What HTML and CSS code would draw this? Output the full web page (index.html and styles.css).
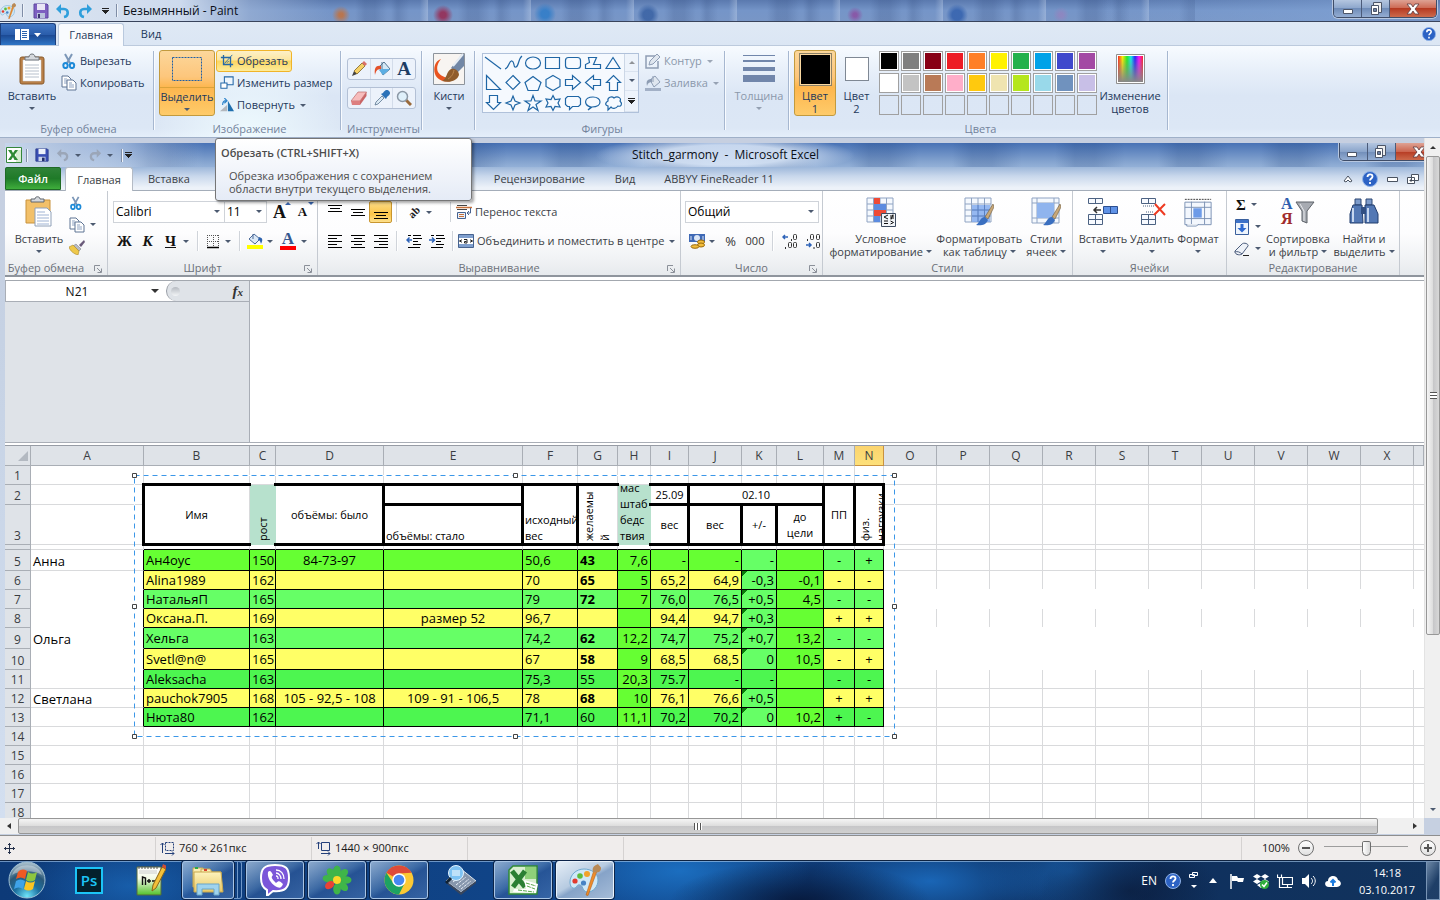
FILE: index.html
```html
<!DOCTYPE html>
<html lang="ru">
<head>
<meta charset="utf-8">
<title>Безымянный - Paint</title>
<link rel="stylesheet" href="styles.css">
</head>
<body>
<svg class="defs" aria-hidden="true">
  <defs>
    <linearGradient id="gFolder" x1="0" y1="0" x2="0" y2="1"><stop offset="0" stop-color="#fdf3bd"/><stop offset="1" stop-color="#e9c866"/></linearGradient>
    <linearGradient id="gRainbow"><stop offset="0" stop-color="#f22"/><stop offset=".18" stop-color="#fe0"/><stop offset=".36" stop-color="#2e2"/><stop offset=".52" stop-color="#1ee"/><stop offset=".68" stop-color="#22f"/><stop offset=".84" stop-color="#f1f"/><stop offset="1" stop-color="#f22"/></linearGradient>
    <linearGradient id="gGray" x1="0" y1="0" x2="0" y2="1"><stop offset="0" stop-color="#888" stop-opacity="0"/><stop offset="1" stop-color="#888"/></linearGradient>
    <radialGradient id="gOrb" cx=".5" cy=".95" r=".9"><stop offset="0" stop-color="#6fe6fb"/><stop offset=".4" stop-color="#1c6f9f"/><stop offset=".7" stop-color="#2a5878"/><stop offset="1" stop-color="#9fb8c6"/></radialGradient>
    <linearGradient id="gNpp" x1="0" y1="0" x2="0" y2="1"><stop offset="0" stop-color="#fff"/><stop offset=".4" stop-color="#f4fbe8"/><stop offset="1" stop-color="#52c12a"/></linearGradient>
  </defs>
  <symbol id="palette" viewBox="0 0 32 32"><path d="M15 5C7 5 1 11 1 18c0 4 2 7 5 6 2-1 2-4 5-3 3 0 2 6 7 7 7 0 11-6 11-12C29 9 22 5 15 5z" fill="#cfe8f7" stroke="#6fa9cf"/><circle cx="6" cy="17" r="2.6" fill="#e23a2e"/><circle cx="11" cy="12" r="2.8" fill="#5dbb3c"/><circle cx="18" cy="10" r="3" fill="#f2a32a"/><circle cx="14.500" cy="19" r="2.600" fill="#4783c4"/><path d="M25 6l-8 25 2 .5L28 7z" fill="#ef8d2c" stroke="#b4611a" stroke-width=".6"/><path d="M24 8c-1-4 0-6 5-8 1 2 4 3 3 5-1 4-4 4-8 3z" fill="#b98a57"/></symbol>
  <symbol id="disk" viewBox="0 0 16 16"><path d="M1 1h13l1 1v13H1z" fill="#7d5fc0" stroke="#5f489f"/><path d="M4 1h8v6H4z" fill="#e9e6f5"/><path d="M4 10h8v5H4z" fill="#b9c3dc"/><path d="M5 11h2v4H5z" fill="#3c3470"/></symbol>
  <symbol id="disk-blue" viewBox="0 0 16 16"><path d="M1 1h13l1 1v13H1z" fill="#3a4fb4" stroke="#2c3c8c"/><path d="M4 1h8v6H4z" fill="#edf1fb"/><path d="M4 10h8v5H4z" fill="#c9d3ea"/><path d="M8 11h3v4H8z" fill="#222e6a"/></symbol>
  <symbol id="undo" viewBox="0 0 16 16"><path d="M3 6h6c5 0 5 7 0 8" fill="none" stroke="currentColor" stroke-width="2.600"/><path d="M6 1v10L1 6z" fill="currentColor"/></symbol>
  <symbol id="redo" viewBox="0 0 16 16"><path d="M13 6H7c-5 0-5 7 0 8" fill="none" stroke="currentColor" stroke-width="2.600"/><path d="M10 1v10l5-5z" fill="currentColor"/></symbol>
  <symbol id="paste" viewBox="0 0 26 32"><rect x="1" y="4" width="24" height="27" rx="2" fill="#b98048" stroke="#8a5a2a"/><path d="M4 7h18v21H4z" fill="#fff" stroke="#cfd6de" stroke-width=".5"/><path d="M6 12h14M6 15h14M6 18h14M6 21h14M6 24h14" stroke="#b7c0cc"/><path d="M6 7V4h4c0-4 6-4 6 0h4v3z" fill="#d4d8dd" stroke="#6f757c"/></symbol>
  <symbol id="paste-x" viewBox="0 0 28 32"><path d="M1 4h24v23H1z" fill="#f2c069" stroke="#c8923d"/><path d="M6 6V3h4c0-3 5-3 5 0h4v3z" fill="#d4d8dd" stroke="#60666e"/><path d="M10 12h12l4 4v14H10z" fill="#fff" stroke="#8fa0b8"/><path d="M12 16h8M12 19h12M12 22h12M12 25h12M12 28h12" stroke="#9fb3d4"/></symbol>
  <symbol id="cut" viewBox="0 0 16 16"><path d="M4 1l5 9M11 1L6 10" stroke="#7c97b8" stroke-width="2" fill="none"/><ellipse cx="4.500" cy="12.500" rx="2.200" ry="2.600" fill="none" stroke="#1d8ad8" stroke-width="2"/><ellipse cx="11" cy="12.500" rx="2.200" ry="2.600" fill="none" stroke="#1d8ad8" stroke-width="2"/></symbol>
  <symbol id="copy" viewBox="0 0 16 16"><path d="M1 1h6l3 3v8H1z" fill="#fff" stroke="#5f7494"/><path d="M3 4h3M3 6h5M3 8h5" stroke="#8fa3c2"/><path d="M6 5h6l3 3v7H6z" fill="#fff" stroke="#5f7494"/><path d="M8 8h3M8 10h5M8 12h5" stroke="#8fa3c2"/></symbol>
  <symbol id="crop" viewBox="0 0 16 16"><path d="M1 4h11v11M4 1v11h11" fill="none" stroke="#2468a8" stroke-width="1.500"/><path d="M5 11l9-10M8 10l2-2" stroke="#2468a8"/></symbol>
  <symbol id="resize" viewBox="0 0 16 16"><path d="M5 1h10v9H5z" fill="#eef5fc" stroke="#2468a8" stroke-width="1.200"/><path d="M1 8h7v6H1z" fill="#fff" stroke="#2468a8" stroke-width="1.200"/></symbol>
  <symbol id="rotate" viewBox="0 0 16 16"><path d="M0 15l8-7v7z" fill="#b3b7bd"/><path d="M9 3v12h7z" fill="#1f6fae"/><path d="M3 8c0-4 2-5 4-5M5 0l3 3-3 3" fill="none" stroke="#2c83cb" stroke-width="1.300"/></symbol>
  <symbol id="pencil" viewBox="0 0 16 16"><path d="M1 15l2-5 3 3z" fill="#444"/><path d="M3 10l8-8 3 3-8 8z" fill="#f5d067" stroke="#7d6326" stroke-width=".8"/><path d="M11 2l2-2 3 3-2 2z" fill="#d97068"/></symbol>
  <symbol id="bucket" viewBox="0 0 16 16"><path d="M5 6l5-5 6 7-7 6z" fill="#d3e8f6" stroke="#547591"/><path d="M8 8l8 0-7 6-4-5z" fill="#5caee3"/><path d="M8 1v7" stroke="#547591"/><path d="M7 5C2 4 0 7 1 14c1-4 2-6 6-6z" fill="#e3512b"/></symbol>
  <symbol id="bucket-off" viewBox="0 0 16 16"><path d="M5 5l5-4 5 6-6 5z" fill="#dfe6ef" stroke="#8e9db4"/><path d="M7 4C2 4 1 6 2 11c1-3 2-4 5-4z" fill="#8e9db4"/><path d="M0 13h16v3H0z" fill="#a2b0c6"/><path d="M8 1v6" stroke="#8e9db4"/></symbol>
  <symbol id="outline-off" viewBox="0 0 16 16"><path d="M10 3H1v12h12V8" fill="none" stroke="#8e9db4" stroke-width="1.500"/><path d="M4 12l1-4 7-7 3 3-7 7z" fill="#dfe6ef" stroke="#8e9db4"/></symbol>
  <symbol id="eraser" viewBox="0 0 16 16"><path d="M0 11l7-9h8.500L9 11z" fill="#f7bcbc" stroke="#bd6a6a" stroke-width=".7"/><path d="M0 11h9v4H1z" fill="#dd7f80"/><path d="M9 11l6.500-9v4L9 15z" fill="#c96465"/></symbol>
  <symbol id="dropper" viewBox="0 0 16 16"><path d="M1 15l1-3 6-6 2 2-6 6z" fill="#dbe9f4" stroke="#5c7690" stroke-width=".8"/><path d="M7 4l5 5 1-2c3-2 4-4 2-6s-4-1-6 2z" fill="#2b72b8"/></symbol>
  <symbol id="lens" viewBox="0 0 16 16"><path d="M10 10l5 5" stroke="#9a6a3a" stroke-width="3"/><circle cx="6.500" cy="6.500" r="5" fill="#dff0fb" stroke="#8b98a6" stroke-width="1.500"/></symbol>
  <symbol id="brush" viewBox="0 0 32 32"><path d="M.5.500h31v31H.5z" fill="#f7f4f1" stroke="#8d949c"/><path d="M8 6C2 8 0 15 2 21c2 6 10 9 16 7 2-1 3-3 2-4-4 2-12 0-15-5-2-5 0-9 3-13z" fill="#e9531f"/><path d="M18 15L29 1h2v12l-7 7z" fill="#7187a6"/><path d="M20 13L30 1" stroke="#e7edf4" stroke-width="2"/><path d="M9 28c5-2 4-9 9-12 4-1 8 2 8 6-2 6-9 8-17 6z" fill="#8f5c2c"/><path d="M15 26c3-2 5-4 6-9" stroke="#bd8850" fill="none"/></symbol>
  <symbol id="lines" viewBox="0 0 32 28"><path d="M0 .5h32" stroke="#7186ab"/><path d="M0 6h32" stroke="#7186ab" stroke-width="2"/><path d="M0 14h32" stroke="#7186ab" stroke-width="4"/><path d="M0 23.500h32" stroke="#7186ab" stroke-width="7"/></symbol>
  <symbol id="help" viewBox="0 0 16 16"><circle cx="8" cy="8" r="7.500" fill="#2c62c4" stroke="#8fb2e8"/><path d="M5.500 6c0-3.500 5-3.500 5-.5 0 2-2.500 2-2.500 4M8 11v2" stroke="#fff" stroke-width="1.800" fill="none"/></symbol>
  <symbol id="win-min" viewBox="0 0 16 16"><path d="M3.500 8.500h9v4h-9z" fill="#fff" stroke="#4c5568"/></symbol>
  <symbol id="win-max" viewBox="0 0 16 16"><path d="M5.500 1.500h8v10h-8z" fill="#eee" stroke="#4c5568"/><path d="M3.500 4.500h7v9h-7z" fill="#fff" stroke="#4c5568"/><path d="M5.500 7.500h3v3h-3z" fill="#6d80a3" stroke="#4c5568"/></symbol>
  <symbol id="win-x" viewBox="0 0 16 16"><path d="M2 3h4l2 3 2-3h4l-4 5 4 5h-4l-2-3-2 3H2l4-5z" fill="#fff" stroke="#5a3a40" stroke-width=".8"/></symbol>
  <symbol id="excel" viewBox="0 0 16 16"><path d="M.5.500h15v15H.5z" fill="#fff" stroke="#35863b"/><path d="M10 3h5v12h-5z" fill="#d7eed1"/><path d="M2 3h3.500L7 6l2-3h3L8.500 8l3.500 5H8.500L7 10l-2 3H2l3.500-5z" fill="#2f8a35"/></symbol>
  <symbol id="launcher" viewBox="0 0 8 8"><path d="M.5 6V.5H6M3 3l4 4M7.500 3.500v4h-4" fill="none" stroke="#8b9099"/></symbol>
  <symbol id="al-l" viewBox="0 0 16 16"><path d="M1 2.500h14M1 5.500h9M1 8.500h14M1 11.500h9M1 14.500h14" stroke="#000"/></symbol>
  <symbol id="al-c" viewBox="0 0 16 16"><path d="M1 2.500h14M4 5.500h8M1 8.500h14M4 11.500h8M1 14.500h14" stroke="#000"/></symbol>
  <symbol id="al-r" viewBox="0 0 16 16"><path d="M1 2.500h14M6 5.500h9M1 8.500h14M6 11.500h9M1 14.500h14" stroke="#000"/></symbol>
  <symbol id="va-t" viewBox="0 0 16 16"><path d="M1 1.500h14M3 4.500h10M1 7.500h14" stroke="#000"/></symbol>
  <symbol id="va-m" viewBox="0 0 16 16"><path d="M1 5.500h14M3 8.500h10M1 11.500h14" stroke="#000"/></symbol>
  <symbol id="va-b" viewBox="0 0 16 16"><path d="M1 8.500h14M3 11.500h10M1 14.500h14" stroke="#000"/></symbol>
  <symbol id="ind-l" viewBox="0 0 16 16"><path d="M7 2.500h8M7 5.500h9M7 8.500h5M7 11.500h8M2 14.500h12M2 2.500h3" stroke="#000"/><path d="M6 7H1M3.500 4.500L1 7l2.500 2.500" stroke="#2e63b8" stroke-width="1.500" fill="none"/></symbol>
  <symbol id="ind-r" viewBox="0 0 16 16"><path d="M7 2.500h8M7 5.500h9M7 8.500h5M7 11.500h8M2 14.500h12M2 2.500h3" stroke="#000"/><path d="M0 7h5M3 4.500L5.500 7 3 9.500" stroke="#2e63b8" stroke-width="1.500" fill="none"/></symbol>
  <symbol id="borders" viewBox="0 0 16 16"><path d="M2 2.500h12M2 8.500h12M2.500 2v12M8.500 2v12M13.500 2v12" stroke="#555" stroke-dasharray="1 1"/><path d="M2 14.500h12" stroke="#000" stroke-width="1.500"/></symbol>
  <symbol id="fill" viewBox="0 0 16 16"><path d="M2 6l5-5 6 5-5 5z" fill="#dbe8f6" stroke="#4c6a98"/><path d="M6 1v5" stroke="#4c6a98"/><path d="M12 4c4 1 4 3 2 7-1-3-1-4-3-4z" fill="#2d62ad"/><path d="M0 12h16v4H0z" fill="#ff0"/></symbol>
  <symbol id="wrap" viewBox="0 0 16 16"><path d="M1 1.500h10M1 5.500h10" stroke="#444"/><path d="M0 3.500h16" stroke="#c6703a" stroke-width="1.500"/><path d="M1.500 8.500h8v6h-8z" fill="#eaf1fa" stroke="#47638f"/><path d="M3 10.500h5M3 12.500h5" stroke="#c6703a"/><path d="M14.500 4v5h-3M13 7l-2 2 2 2" fill="none" stroke="#47638f"/></symbol>
  <symbol id="merge" viewBox="0 0 16 16"><path d="M.5 1.500h15v13H.5z" fill="#7f9fce" stroke="#47638f"/><path d="M1 5h14v6H1z" fill="#fff"/><path d="M1 8h3M12 8h3M3.500 6.500L2 8l1.500 1.500M12.500 6.500L14 8l-1.500 1.500M6 6.500h3v3.500H6.500V8.500h2" stroke="#222" fill="none"/></symbol>
  <symbol id="money" viewBox="0 0 16 16"><path d="M0 1h16v8H0z" fill="#3f69b5"/><circle cx="8" cy="5" r="3" fill="#dce7f7"/><path d="M2 3v4M14 3v4" stroke="#dce7f7"/><ellipse cx="12" cy="9" rx="3.500" ry="2" fill="#f2bd3b" stroke="#9b6c10"/><ellipse cx="12" cy="12" rx="3.500" ry="2" fill="#f2bd3b" stroke="#9b6c10"/><ellipse cx="6" cy="13.500" rx="4" ry="1.800" fill="#f2bd3b" stroke="#9b6c10"/></symbol>
  <symbol id="grid5" viewBox="0 0 30 30"><path d="M1 1h26v24H1z" fill="#f5f9fe" stroke="#8fa3c2"/><path d="M1 7h26M1 13h26M1 19h26M7.500 1v24M14 1v24M20.500 1v24" stroke="#8fa3c2"/></symbol>
  <symbol id="cond" viewBox="0 0 30 30"><use href="#grid5" width="30" height="30"/><path d="M8 1h6v6H8zM8 13h12v6H8z" fill="#ee4a36"/><path d="M8 7h12v6H8zM8 19h6v6H8z" fill="#5b8be0"/><path d="M15.500 16.500h14v13h-14z" fill="#f2f5f9" stroke="#3e4c60"/><path d="M22 18l-4 2 4 2M18 24h4M18 26.500h4M24 19h4M24 21h4M27 17.500l-2 5M24.500 24l3 1.500-3 1.500" stroke="#111" fill="none"/></symbol>
  <symbol id="fmt-table" viewBox="0 0 30 30"><use href="#grid5" width="30" height="30"/><path d="M8 8h18v17H8z" fill="#7da8ee" fill-opacity=".8"/><path d="M8 13h18M8 19h18M14 8v17M20.500 8v17" stroke="#5a80c0"/><path d="M29 7l-8 13 3 2 6-12z" fill="#c9a878" stroke="#6f5a3a" stroke-width=".6"/><path d="M12 28c3-1 4-8 9-8l3 3c-2 5-7 6-12 5z" fill="#3a6fc0"/></symbol>
  <symbol id="cell-style" viewBox="0 0 30 30"><path d="M1 1h27v25H1z" fill="#f5f9fe" stroke="#8fa3c2"/><path d="M1 6h27M1 21h27M6 1v25M23 1v25" stroke="#8fa3c2"/><path d="M6 6h17v15H6z" fill="#8fb4ee"/><path d="M29 7l-8 13 3 2 6-12z" fill="#c9a878" stroke="#6f5a3a" stroke-width=".6"/><path d="M12 28c3-1 4-8 9-8l3 3c-2 5-7 6-12 5z" fill="#3a6fc0"/></symbol>
  <symbol id="ins" viewBox="0 0 30 30"><path d="M.5 1.500h14v5H.5zM7.500 1v6M.5 17.500h14v10H.5zM.5 22.500h14M7.500 17.500v10" fill="#f7faff" stroke="#4c6282"/><path d="M15.500 9.500h14v7h-14z" fill="#5f92e6" stroke="#2c4f90"/><path d="M22.500 10v6" stroke="#2c4f90"/><path d="M6 13h7M9 10l-3 3 3 3" stroke="#333" fill="none" stroke-width="1.500"/></symbol>
  <symbol id="del" viewBox="0 0 30 30"><path d="M4.500 1.500h14v5h-14zM11.500 1v6M4.500 17.500h14v10h-14zM4.500 22.500h14M11.500 17.500v10" fill="#f7faff" stroke="#4c6282"/><path d="M6 9h11M9 15h8" stroke="#4c6282" stroke-dasharray="1 1"/><path d="M18 7l10 11M28 7L17 18" stroke="#ee3b22" stroke-width="2"/></symbol>
  <symbol id="fmt" viewBox="0 0 32 32"><path d="M2 2.500h28" stroke="#333" stroke-dasharray="2 1"/><path d="M2 5.500h28v24H2z" fill="#f3f7fd" stroke="#7a90b2"/><path d="M2 11h28M2 23h28M9 5v24M23 5v24" stroke="#7a90b2"/><path d="M11 12h9v10h-9z" fill="#6d9be8"/><path d="M4 29v2h10l3-2" fill="#fff" stroke="#7a90b2"/></symbol>
  <symbol id="sort" viewBox="0 0 30 30"><path d="M11 6h18l-7 9v12l-5-2V15z" fill="#a7abb2" stroke="#5d6269"/><path d="M15 8l4 7v10" stroke="#e9ebee" fill="none"/></symbol>
  <symbol id="binoc" viewBox="0 0 30 30"><path d="M6 2h6v6H6zM17 2h6v6h-6z" fill="#7d9bca" stroke="#2c4673"/><path d="M4 8h9l1 18H1V17zM16 8h9l4 9v9H16z" fill="#5378b4" stroke="#213c6c"/><path d="M12 10h5v7h-5z" fill="#314f82"/><path d="M4 11v14M19 11v14" stroke="#c6d7ef" stroke-width="2"/></symbol>
  <symbol id="filldown" viewBox="0 0 16 16"><path d="M1.500.500h13v15h-13z" fill="#eef4fc" stroke="#3a5f9d"/><path d="M2 1h12v3H2z" fill="#3e72c8"/><path d="M6.500 5h3v4h3L8 13.500 3.500 9h3z" fill="#2f6ad0"/></symbol>
  <symbol id="rubber" viewBox="0 0 16 16"><path d="M1 10l7-7c2-2 7 0 6 2l-6 8c-3 2-8 0-7-3z" fill="#eef2f8" stroke="#4b5c7c"/><path d="M1 11c2-1 5 0 7 2" stroke="#4b5c7c" fill="none"/><path d="M9 14.500h6" stroke="#222"/></symbol>
  <symbol id="broom" viewBox="0 0 16 16"><path d="M15 1l-5 5 2 2 4-5z" fill="#6a5a7a"/><path d="M7 5l5 5-2 2-6-5z" fill="#b8bcc6" stroke="#70747c" stroke-width=".5"/><path d="M0 8l4-2 6 6-1 4c-4-1-8-4-9-8z" fill="#eec84a" stroke="#a8862a" stroke-width=".6"/></symbol>
  <symbol id="dec-l" viewBox="0 0 16 16"><path d="M6 4H1M3 2L1 4l2 2" stroke="#2e63b8" fill="none" stroke-width="1.500"/><rect x="11.500" y="1.500" width="3" height="5" rx="1" fill="none" stroke="#333"/><rect x="6.500" y="9.500" width="3" height="5" rx="1" fill="none" stroke="#333"/><rect x="11.500" y="9.500" width="3" height="5" rx="1" fill="none" stroke="#333"/><path d="M9.500 6v2M3.500 14v2" stroke="#333"/></symbol>
  <symbol id="dec-r" viewBox="0 0 16 16"><path d="M1 12h5M4 10l2 2-2 2" stroke="#2e63b8" fill="none" stroke-width="1.500"/><rect x="5.500" y="1.500" width="3" height="5" rx="1" fill="none" stroke="#333"/><rect x="11.500" y="1.500" width="3" height="5" rx="1" fill="none" stroke="#333"/><rect x="11.500" y="9.500" width="3" height="5" rx="1" fill="none" stroke="#333"/><path d="M2.500 6v2M9 14v2" stroke="#333"/></symbol>
  <symbol id="sel-size" viewBox="0 0 16 16"><path d="M2.500 13V3M.5 5l2-2 2 2" fill="none" stroke="#24407a"/><path d="M5.500 2.500h8v8h-8z" fill="none" stroke="#24407a" stroke-dasharray="2 1"/><path d="M5 13.500h9M12 11.500l2 2-2 2" fill="none" stroke="#24407a"/></symbol>
  <symbol id="img-size" viewBox="0 0 16 16"><path d="M2.500 9V2M.5 4l2-2 2 2" fill="none" stroke="#24407a"/><path d="M5.500 2.500h8v8h-8z" fill="none" stroke="#24407a"/><path d="M5 13.500h9M12 11.500l2 2-2 2" fill="none" stroke="#24407a"/></symbol>
</svg>

<header class="titlebar">
  <svg class="i16"><use href="#palette"/></svg><i class="tsep"></i>
  <button class="qa" aria-label="Сохранить"><svg class="i16"><use href="#disk"/></svg></button>
  <button class="qa blue" aria-label="Отменить"><svg class="i16"><use href="#undo"/></svg></button>
  <button class="qa blue" aria-label="Вернуть"><svg class="i16"><use href="#redo"/></svg></button>
  <button class="qa" aria-label="Настройка панели"><i class="more"></i></button><i class="tsep"></i>
  <h1 class="title">Безымянный - Paint</h1>
  <div class="winbtns">
    <button aria-label="Свернуть"><svg class="i16"><use href="#win-min"/></svg></button><button aria-label="Развернуть"><svg class="i16"><use href="#win-max"/></svg></button><button class="close" aria-label="Закрыть"><svg class="i16"><use href="#win-x"/></svg></button>
  </div>
</header>

<nav class="ptabs">
  <button class="pfile" aria-label="Меню Paint"><svg width="26" height="12" viewBox="0 0 26 12"><path d="M0 0h14v11H0z" fill="#fff"/><path d="M5.500 0v11" stroke="#2b62ad"/><path d="M7 2.500h5M7 4.500h5M7 6.500h5M7 8.500h5" stroke="#2b62ad"/><path d="M19 4h7l-3.500 4z" fill="#fff"/></svg></button>
  <button class="ptab on">Главная</button>
  <button class="ptab">Вид</button>
  <button class="phelp" aria-label="Справка"><svg class="i14"><use href="#help"/></svg></button>
</nav>

<section class="pribbon">
  <div class="pg g-clip">
    <div class="body">
      <button class="big"><svg width="26" height="32"><use href="#paste"/></svg><span>Вставить</span><i class="dn"></i></button>
      <div class="rows">
        <button class="row"><svg class="i16"><use href="#cut"/></svg>Вырезать</button>
        <button class="row"><svg class="i16"><use href="#copy"/></svg>Копировать</button>
      </div>
    </div>
    <div class="lab">Буфер обмена</div>
  </div>
  <div class="pg g-image">
    <div class="body">
      <button class="big selected"><svg width="32" height="32"><rect x="1.500" y="4.500" width="29" height="23" fill="none" stroke="#1f5fa6" stroke-dasharray="2 1"/></svg><span>Выделить</span><i class="dn"></i></button>
      <div class="rows">
        <button class="row hot"><svg class="i14"><use href="#crop"/></svg>Обрезать</button>
        <button class="row"><svg class="i14"><use href="#resize"/></svg>Изменить размер</button>
        <button class="row"><svg class="i14"><use href="#rotate"/></svg>Повернуть<i class="dn"></i></button>
      </div>
    </div>
    <div class="lab">Изображение</div>
  </div>
  <div class="pg g-tools">
    <div class="body">
      <div class="trio"><button aria-label="Карандаш"><svg class="i16"><use href="#pencil"/></svg></button><button aria-label="Заливка цветом"><svg class="i16"><use href="#bucket"/></svg></button><button class="letter">A</button></div>
      <div class="trio"><button aria-label="Ластик"><svg class="i16"><use href="#eraser"/></svg></button><button aria-label="Палитра"><svg class="i16"><use href="#dropper"/></svg></button><button aria-label="Масштаб"><svg class="i16"><use href="#lens"/></svg></button></div>
    </div>
    <div class="lab">Инструменты</div>
  </div>
  <div class="pg g-brush">
    <div class="body"><button class="big"><svg width="32" height="32"><use href="#brush"/></svg><span>Кисти</span><i class="dn"></i></button></div>
  </div>
  <div class="pg g-shapes">
    <div class="body">
      <div class="gallery">
        <svg width="140" height="58" viewBox="0 0 140 58" fill="#f6faff" stroke="#1f66a5" stroke-width="1.200">
          <path d="M2 3l16 12"/><path d="M22 15c4-1 4-9 7-8s1 7 4 6 2-8 6-11" fill="none"/><ellipse cx="50" cy="9" rx="7.500" ry="6"/><path d="M62.500 3.500h14v11h-14z"/><rect x="82.500" y="3.500" width="15" height="11" rx="3"/><path d="M102.500 14.500v-4l4-2-1-5h8l-3 7h7v4z"/><path d="M130 3.500l7 11h-14z"/>
          <path d="M3.500 21.500v14h14z"/><path d="M30 21.500l7 7-7 7-7-7z"/><path d="M50 22.500l8 6-3 8H45l-3-8z"/><path d="M70 21.500l7 4v7l-7 4-7-4v-7z"/><path d="M82.500 25.500h7v-4l8 7-8 7v-4h-7z"/><path d="M117.500 25.500h-7v-4l-8 7 8 7v-4h7z"/><path d="M126.500 36.500v-8h-3l7-7 7 7h-3v8z"/>
          <path d="M6.500 41.500v7h-3l7 7 7-7h-3v-7z"/><path d="M30 42l2 5 5 2-5 2-2 5-2-5-5-2 5-2z"/><path d="M50 41.500l2 5.500h6l-5 3.500 2 6-5-3.500-5 3.500 2-6-5-3.500h6z"/><path d="M70 41.500l2 4 5-.5-2 4 2 4-5-.5-2 4-2-4-5 .5 2-4-2-4 5 .5z"/><path d="M84.500 42.500h11l2 2v6l-2 2h-6l-3 3v-3h-2l-2-2v-6z"/><path d="M108 53c-8-2-7-10 2-10s10 10-1 10l-4 3z"/><path d="M125 52c-4-1-2-4 0-5-1-4 4-5 6-3 4-3 8 1 6 3 3 3 1 6-2 5-2 3-6 3-7 1l-3 3z"/>
        </svg>
        <div class="gscroll"><button class="off" aria-label="Вверх"><i class="up"></i></button><button aria-label="Вниз"><i class="dn"></i></button><button aria-label="Все фигуры"><i class="more"></i></button></div>
      </div>
      <div class="rows dim">
        <button class="row" disabled><svg class="i16"><use href="#outline-off"/></svg>Контур<i class="dn"></i></button>
        <button class="row" disabled><svg class="i16"><use href="#bucket-off"/></svg>Заливка<i class="dn"></i></button>
      </div>
    </div>
    <div class="lab">Фигуры</div>
  </div>
  <div class="pg g-size">
    <div class="body dim"><button class="big" disabled><svg width="32" height="32" viewBox="0 -2 32 32"><use href="#lines" width="32" height="28"/></svg><span>Толщина</span><i class="dn"></i></button></div>
  </div>
  <div class="pg g-colors">
    <div class="body">
      <button class="big selected c1"><b class="sw black"></b><span>Цвет<br>1</span></button>
      <button class="big c2"><b class="sw"></b><span>Цвет<br>2</span></button>
      <div class="pal">
        <button style="background:#000000"></button><button style="background:#7f7f7f"></button><button style="background:#880015"></button><button style="background:#ed1c24"></button><button style="background:#ff7f27"></button><button style="background:#fff200"></button><button style="background:#22b14c"></button><button style="background:#00a2e8"></button><button style="background:#3f48cc"></button><button style="background:#a349a4"></button>
        <button style="background:#ffffff"></button><button style="background:#c3c3c3"></button><button style="background:#b97a57"></button><button style="background:#ffaec9"></button><button style="background:#ffc90e"></button><button style="background:#efe4b0"></button><button style="background:#b5e61d"></button><button style="background:#99d9ea"></button><button style="background:#7092be"></button><button style="background:#c8bfe7"></button>
        <button class="none"></button><button class="none"></button><button class="none"></button><button class="none"></button><button class="none"></button><button class="none"></button><button class="none"></button><button class="none"></button><button class="none"></button><button class="none"></button>
      </div>
      <button class="big edit"><svg width="32" height="32" viewBox="0 0 32 32"><path d="M2.500 1.500h28v29h-28z" fill="#fff" stroke="#8f8f8f"/><path d="M4 3h25v26H4z" fill="url(#gRainbow)"/><path d="M4 3h25v26H4z" fill="url(#gGray)"/></svg><span>Изменение<br>цветов</span></button>
    </div>
    <div class="lab">Цвета</div>
  </div>
</section>

<main class="work">
  <div class="canvas">
    <section class="excel">
      <header class="xtitle">
        <svg class="i16"><use href="#excel"/></svg><i class="tsep"></i>
        <button class="qa" aria-label="Сохранить"><svg class="i14"><use href="#disk-blue"/></svg></button>
        <button class="qa gray" aria-label="Отменить"><svg class="i14"><use href="#undo"/></svg><i class="dn"></i></button>
        <button class="qa gray" aria-label="Вернуть"><svg class="i14"><use href="#redo"/></svg><i class="dn"></i></button><i class="tsep"></i>
        <button class="qa" aria-label="Настройка"><i class="more"></i></button>
        <h2 class="title">Stitch_garmony&nbsp; -&nbsp; Microsoft Excel</h2>
        <div class="winbtns">
          <button aria-label="Свернуть"><svg class="i16"><use href="#win-min"/></svg></button><button aria-label="Развернуть"><svg class="i16"><use href="#win-max"/></svg></button><button class="close" aria-label="Закрыть"><svg class="i16"><use href="#win-x"/></svg></button>
        </div>
      </header>
      <nav class="xtabs">
        <button class="xfile">Файл</button>
        <button class="xtab on">Главная</button>
        <button class="xtab">Вставка</button>
        <i class="gap"></i>
        <button class="xtab">Рецензирование</button>
        <button class="xtab">Вид</button>
        <button class="xtab">ABBYY FineReader 11</button>
        <div class="xright">
          <button aria-label="Свернуть ленту"><svg width="10" height="8" viewBox="0 0 10 8"><path d="M1 6l4-5 4 5-2 1-2-2-2 2z" fill="#fff" stroke="#4a5361"/></svg></button>
          <button aria-label="Справка"><svg class="i16"><use href="#help"/></svg></button>
          <button aria-label="Свернуть"><svg width="11" height="8" viewBox="0 0 11 8"><path d="M.5 2.500h10v4H.5z" fill="#fff" stroke="#4a5361"/></svg></button>
          <button aria-label="Окно"><svg width="12" height="12" viewBox="0 0 12 12"><path d="M4.500 1.500h7v6h-7zM.5 4.500h7v6h-7z" fill="#fff" stroke="#4a5361"/><path d="M3 7h2v1H3z" stroke="#4a5361"/></svg></button>
        </div>
      </nav>
      <section class="xribbon">
        <div class="xg x-clip">
          <div class="body">
            <button class="big"><svg width="28" height="32"><use href="#paste-x"/></svg><span>Вставить</span><i class="dn"></i></button>
            <div class="stack"><button aria-label="Вырезать"><svg class="i14"><use href="#cut"/></svg></button><button aria-label="Копировать"><svg class="i16"><use href="#copy"/></svg><i class="dn"></i></button><button aria-label="Формат по образцу"><svg class="i16"><use href="#broom"/></svg></button></div>
          </div>
          <div class="lab">Буфер обмена<svg class="launch"><use href="#launcher"/></svg></div>
        </div>
        <div class="xg x-font">
          <div class="body two">
            <div class="line">
              <label class="sel w112"><select aria-label="Шрифт"><option>Calibri</option></select><i class="dn"></i></label><label class="sel w42"><select aria-label="Размер"><option>11</option></select><i class="dn"></i></label>
              <button class="t t-lg">A<sup class="tri"></sup></button><button class="t t-sm">A<sup class="tri down"></sup></button>
            </div>
            <div class="line">
              <button class="t t-b">Ж</button><button class="t t-i">К</button><button class="t t-u">Ч</button><i class="dn g8"></i><i class="vs"></i>
              <button class="t" aria-label="Границы"><svg class="i16"><use href="#borders"/></svg></button><i class="dn g8"></i><i class="vs"></i>
              <button class="t" aria-label="Цвет заливки"><svg class="i16"><use href="#fill"/></svg></button><i class="dn g8"></i><button class="t t-color">A</button><i class="dn g8"></i>
            </div>
          </div>
          <div class="lab">Шрифт<svg class="launch"><use href="#launcher"/></svg></div>
        </div>
        <div class="xg x-align">
          <div class="body two">
            <div class="line">
              <button class="t" aria-label="По верхнему краю"><svg class="i16"><use href="#va-t"/></svg></button><button class="t" aria-label="По середине"><svg class="i16"><use href="#va-m"/></svg></button><button class="t on" aria-label="По нижнему краю"><svg class="i16"><use href="#va-b"/></svg></button><i class="vs"></i>
              <button class="t orient" aria-label="Ориентация"><span>ab</span></button><i class="dn g8"></i><i class="vs far"></i>
              <button class="row"><svg class="i16"><use href="#wrap"/></svg>Перенос текста</button>
            </div>
            <div class="line">
              <button class="t" aria-label="По левому краю"><svg class="i16"><use href="#al-l"/></svg></button><button class="t" aria-label="По центру"><svg class="i16"><use href="#al-c"/></svg></button><button class="t" aria-label="По правому краю"><svg class="i16"><use href="#al-r"/></svg></button><i class="vs"></i>
              <button class="t" aria-label="Уменьшить отступ"><svg class="i16"><use href="#ind-l"/></svg></button><button class="t" aria-label="Увеличить отступ"><svg class="i16"><use href="#ind-r"/></svg></button><i class="vs"></i>
              <button class="row"><svg class="i16"><use href="#merge"/></svg>Объединить и поместить в центре<i class="dn"></i></button>
            </div>
          </div>
          <div class="lab">Выравнивание<svg class="launch"><use href="#launcher"/></svg></div>
        </div>
        <div class="xg x-num">
          <div class="body two">
            <div class="line"><label class="sel w134"><select aria-label="Числовой формат"><option>Общий</option></select><i class="dn"></i></label></div>
            <div class="line"><button class="t" aria-label="Финансовый формат"><svg class="i16"><use href="#money"/></svg></button><i class="dn g8"></i><button class="t t-n">%</button><button class="t t-n t-000">000</button><i class="vs"></i><button class="t" aria-label="Увеличить разрядность"><svg class="i16"><use href="#dec-l"/></svg></button><button class="t" aria-label="Уменьшить разрядность"><svg class="i16"><use href="#dec-r"/></svg></button></div>
          </div>
          <div class="lab">Число<svg class="launch"><use href="#launcher"/></svg></div>
        </div>
        <div class="xg x-styles">
          <div class="body">
            <button class="big w116"><svg width="30" height="30"><use href="#cond"/></svg><span>Условное<br>форматирование<i class="dn"></i></span></button>
            <button class="big w82"><svg width="30" height="30"><use href="#fmt-table"/></svg><span>Форматировать<br>как таблицу<i class="dn"></i></span></button>
            <button class="big w52"><svg width="30" height="30"><use href="#cell-style"/></svg><span>Стили<br>ячеек<i class="dn"></i></span></button>
          </div>
          <div class="lab">Стили</div>
        </div>
        <div class="xg x-cells">
          <div class="body">
            <button class="big w52"><svg width="30" height="30"><use href="#ins"/></svg><span>Вставить</span><i class="dn"></i></button>
            <button class="big w46"><svg width="30" height="30"><use href="#del"/></svg><span>Удалить</span><i class="dn"></i></button>
            <button class="big w46"><svg width="30" height="30"><use href="#fmt"/></svg><span>Формат</span><i class="dn"></i></button>
          </div>
          <div class="lab">Ячейки</div>
        </div>
        <div class="xg x-edit">
          <div class="body">
            <div class="stack"><button class="sigma">Σ<i class="dn"></i></button><button aria-label="Заполнить"><svg class="i16"><use href="#filldown"/></svg><i class="dn"></i></button><button aria-label="Очистить"><svg class="i16"><use href="#rubber"/></svg><i class="dn"></i></button></div>
            <button class="big w74"><b class="sorticon"><em>А</em><em>Я</em><svg width="30" height="30"><use href="#sort"/></svg></b><span>Сортировка<br>и фильтр<i class="dn"></i></span></button>
            <button class="big w58"><svg width="30" height="30"><use href="#binoc"/></svg><span>Найти и<br>выделить<i class="dn"></i></span></button>
          </div>
          <div class="lab">Редактирование</div>
        </div>
      </section>

      <div class="formula">
        <div class="fleft">
          <div class="namebox"><input type="text" value="N21" aria-label="Имя ячейки"><i class="dn"></i><div class="fx"><i class="knob"></i><em>f<small>x</small></em></div></div>
        </div>
        <textarea class="ftext" aria-label="Строка формул"></textarea>
      </div>

      <table class="sheet">
        <colgroup><col class="cr"><col class="cA"><col class="cB"><col class="cC"><col class="cD"><col class="cE"><col class="cF"><col class="cG"><col class="cH"><col class="cI"><col class="cJ"><col class="cK"><col class="cL"><col class="cM"><col class="cN"><col class="cO"><col class="cO"><col class="cO"><col class="cO"><col class="cO"><col class="cO"><col class="cO"><col class="cO"><col class="cO"><col class="cO"><col></colgroup>
        <thead><tr class="heads"><th class="corner"><svg width="12" height="12"><path d="M11 1v10H1z" fill="#b3b9c1"/></svg></th><th>A</th><th>B</th><th>C</th><th>D</th><th>E</th><th>F</th><th>G</th><th>H</th><th>I</th><th>J</th><th>K</th><th>L</th><th>M</th><th class="cur">N</th><th>O</th><th>P</th><th>Q</th><th>R</th><th>S</th><th>T</th><th>U</th><th>V</th><th>W</th><th>X</th><th></th></tr></thead>
        <tbody>
          <tr class="h19"><th>1</th><td></td><td></td><td></td><td></td><td></td><td></td><td></td><td></td><td></td><td></td><td></td><td></td><td></td><td></td><td class="rest" colspan="11"></td></tr>
          <tr class="h20 hd"><th>2</th><td></td>
            <td rowspan="2" class="k kl">Имя</td><td rowspan="2" class="mint"><div class="rot">рост</div></td><td rowspan="2" class="k kr">объёмы: было</td><td class="k"></td><td rowspan="2" class="k bot">исходный<br>вес</td><td rowspan="2" class="k kl"><div class="rot two-lines">желаемы<br>й</div></td><td rowspan="2" class="mint"><div class="clip">мас<br>штаб<br>бедс<br>твия</div></td><td class="k kr">25.09</td><td colspan="3" class="k">02.10</td><td rowspan="2" class="k">ПП</td><td rowspan="2" class="k"><div class="rot wide">физ.<br>нагрузки</div></td><td class="rest" colspan="11"></td></tr>
          <tr class="h40 hd"><th>3</th><td></td><td class="k bot">объёмы: стало</td><td class="k kr">вес</td><td class="k">вес</td><td class="k">+/-</td><td class="k">до<br>цели</td><td class="rest" colspan="11"></td></tr>
          <tr class="h5 bb"><th></th><td class="free"></td><td></td><td></td><td></td><td></td><td></td><td></td><td></td><td></td><td></td><td></td><td></td><td></td><td></td><td class="rest" colspan="11"></td></tr>
          <tr class="h21 d lime"><th>5</th><td class="a">Анна</td><td>Ан4оус</td><td>150</td><td class="c">84-73-97</td><td></td><td>50,6</td><td class="b">43</td><td class="r">7,6</td><td class="r">-</td><td class="r">-</td><td class="r lt">-</td><td></td><td class="c lt">-</td><td class="c lt">+</td><td class="rest" colspan="11"></td></tr>
          <tr class="h19 d yel nb"><th>6</th><td class="a"></td><td>Alina1989</td><td>162</td><td></td><td></td><td>70</td><td class="b">65</td><td class="r lm">5</td><td class="r">65,2</td><td class="r">64,9</td><td class="r lt er">-0,3</td><td class="r lm">-0,1</td><td class="c">-</td><td class="c">-</td><td class="rest" colspan="11"></td></tr>
          <tr class="h19 d light nb nv"><th>7</th><td class="a"></td><td>НатальяП</td><td>165</td><td></td><td></td><td>79</td><td class="b">72</td><td class="r lm">7</td><td class="r">76,0</td><td class="r">76,5</td><td class="r lt er">+0,5</td><td class="r lm">4,5</td><td class="c">-</td><td class="c">-</td><td class="rest" colspan="11"></td></tr>
          <tr class="h19 d yel nb"><th>8</th><td class="a"></td><td>Оксана.П.</td><td>169</td><td></td><td class="c">размер 52</td><td>96,7</td><td></td><td class="lm"></td><td class="r">94,4</td><td class="r">94,7</td><td class="r lt er">+0,3</td><td class="lm"></td><td class="c">+</td><td class="c">+</td><td class="rest" colspan="11"></td></tr>
          <tr class="h21 d light nb nv"><th>9</th><td class="a">Ольга</td><td>Хельга</td><td>163</td><td></td><td></td><td>74,2</td><td class="b">62</td><td class="r lm">12,2</td><td class="r">74,7</td><td class="r">75,2</td><td class="r lt er">+0,7</td><td class="r lm">13,2</td><td class="c">-</td><td class="c">-</td><td class="rest" colspan="11"></td></tr>
          <tr class="h21 d yel nb nv"><th>10</th><td class="a"></td><td>Svetl@n@</td><td>165</td><td></td><td></td><td>67</td><td class="b">58</td><td class="r lm">9</td><td class="r">68,5</td><td class="r">68,5</td><td class="r lt er">0</td><td class="r lm">10,5</td><td class="c">-</td><td class="c">+</td><td class="rest" colspan="11"></td></tr>
          <tr class="h19 d grn"><th>11</th><td class="a"></td><td>Aleksacha</td><td>163</td><td></td><td></td><td>75,3</td><td>55</td><td class="r lm">20,3</td><td class="r">75.7</td><td class="r">-</td><td class="r">-</td><td class="lm"></td><td class="c">-</td><td class="c">-</td><td class="rest" colspan="11"></td></tr>
          <tr class="h19 d yel"><th>12</th><td class="a">Светлана</td><td>pauchok7905</td><td>168</td><td class="c">105 - 92,5 - 108</td><td class="c">109 - 91 - 106,5</td><td>78</td><td class="b">68</td><td class="r lm">10</td><td class="r">76,1</td><td class="r">76,6</td><td class="r lt er">+0,5</td><td class="lm"></td><td class="c">+</td><td class="c">+</td><td class="rest" colspan="11"></td></tr>
          <tr class="h19 d grn"><th>13</th><td class="a"></td><td>Нюта80</td><td>162</td><td></td><td></td><td>71,1</td><td>60</td><td class="r lm">11,1</td><td class="r">70,2</td><td class="r">70,2</td><td class="r lt er">0</td><td class="r lm">10,2</td><td class="c">+</td><td class="c">-</td><td class="rest" colspan="11"></td></tr>
          <tr class="h19"><th>14</th><td></td><td></td><td></td><td></td><td></td><td></td><td></td><td></td><td></td><td></td><td></td><td></td><td></td><td></td><td class="rest" colspan="11"></td></tr>
          <tr class="h19"><th>15</th><td></td><td></td><td></td><td></td><td></td><td></td><td></td><td></td><td></td><td></td><td></td><td></td><td></td><td></td><td class="rest" colspan="11"></td></tr>
          <tr class="h19"><th>16</th><td></td><td></td><td></td><td></td><td></td><td></td><td></td><td></td><td></td><td></td><td></td><td></td><td></td><td></td><td class="rest" colspan="11"></td></tr>
          <tr class="h19"><th>17</th><td></td><td></td><td></td><td></td><td></td><td></td><td></td><td></td><td></td><td></td><td></td><td></td><td></td><td></td><td class="rest" colspan="11"></td></tr>
          <tr class="h19"><th>18</th><td></td><td></td><td></td><td></td><td></td><td></td><td></td><td></td><td></td><td></td><td></td><td></td><td></td><td></td><td class="rest" colspan="11"></td></tr>
        </tbody>
      </table>
    </section>
    <svg class="marquee" width="766" height="267" viewBox="0 0 766 267"><rect x="3.500" y="3.500" width="760" height="261" fill="none" stroke="#fff"/><rect x="3.500" y="3.500" width="760" height="261" fill="none" stroke="#3b97e8" stroke-dasharray="5 4"/><g fill="#fff" stroke="#444"><path d="M1.500 1.500h4v4h-4zM382.500 1.500h4v4h-4zM761.500 1.500h4v4h-4zM1.500 132.500h4v4h-4zM761.500 132.500h4v4h-4zM1.500 262.500h4v4h-4zM382.500 262.500h4v4h-4zM761.500 262.500h4v4h-4z"/></g></svg>
  </div>
  <div class="vbar"><button aria-label="Вверх"><i class="up"></i></button><div class="vthumb"><i></i></div><button class="end" aria-label="Вниз"><i class="dn"></i></button></div>
  <div class="hbar"><button aria-label="Влево"><i class="lf"></i></button><div class="hthumb"><i></i></div><button aria-label="Вправо"><i class="rt"></i></button></div>
  <div class="tip" role="tooltip"><strong>Обрезать (CTRL+SHIFT+X)</strong><p>Обрезка изображения с сохранением области внутри текущего выделения.</p></div>
</main>

<footer class="status">
  <div class="st s1"><svg width="11" height="11" viewBox="0 0 11 11"><path d="M5.500 0v11M0 5.500h11M4 2l1.500-1.500L7 2M4 9l1.500 1.500L7 9M2 4L.5 5.500 2 7M9 4l1.500 1.500L9 7" fill="none" stroke="#24304a"/></svg></div>
  <div class="st"><svg class="i16"><use href="#sel-size"/></svg>760 × 261пкс</div>
  <div class="st"><svg class="i16"><use href="#img-size"/></svg>1440 × 900пкс</div>
  <div class="st"></div><div class="st last"></div>
  <div class="zoom"><label for="zoom">100%</label><button aria-label="Уменьшить"><i class="minus"></i></button><input id="zoom" type="range" min="0" max="100" value="50"><button aria-label="Увеличить"><i class="minus"></i><i class="plus"></i></button></div>
</footer>

<nav class="taskbar">
  <button class="tb start" aria-label="Пуск"><svg width="38" height="38" viewBox="0 0 38 38"><circle cx="19" cy="19" r="18" fill="url(#gOrb)" stroke="#9fc0d4"/><path d="M4 14C8 1 30 1 34 14 26 9 12 9 4 14z" fill="#fff" fill-opacity=".35"/><path d="M10 11c3-3 6-3 9-1l-2 8c-3-2-6-2-9 0z" fill="#ee5a24"/><path d="M20 11c3 2 6 2 9 0l-2 8c-3 2-6 2-9 0z" fill="#8dc63f"/><path d="M8 20c3-2 6-2 9 0l-2 8c-3-2-6-2-9 0z" fill="#3fa3e8"/><path d="M18 20c3 2 6 2 9 0l-2 8c-3 2-6 2-9 0z" fill="#fcc522"/></svg></button>
  <button class="tb ps" aria-label="Photoshop"><span>Ps</span></button>
  <button class="tb npp" aria-label="Notepad++"><svg width="32" height="32" viewBox="0 0 32 32"><path d="M3 3h24v28H3z" fill="url(#gNpp)" stroke="#55683f"/><path d="M5 2v3M8 2v3M11 2v3M14 2v3M17 2v3M20 2v3M23 2v3" stroke="#555"/><path d="M5 7h18M5 9h18" stroke="#ccc"/><path d="M8.500 21v-8l3 1v7M13 17h4M15 15v4M18 17h3" stroke="#111" fill="none" stroke-width="1.400"/><path d="M18 27l1-6L28 3l4 2-10 19z" fill="#f3c03a" stroke="#8a6415"/><path d="M28 3l1-3 4 2-1 3z" fill="#cf4f35"/></svg></button>
  <button class="tb fr exp" aria-label="Проводник"><svg width="34" height="32" viewBox="0 0 34 32"><path d="M2 4h10l2 3h6v16H2z" fill="url(#gFolder)" stroke="#c8a84e"/><path d="M10 5h9l2 3h9v17H10z" fill="url(#gFolder)" stroke="#c8a84e"/><path d="M4 3h3v2H4z" fill="#2da84a"/><path d="M13 5h3v2h-3z" fill="#d9402c"/><path d="M20 9h7v2h-7z" fill="#3b8fd6"/><path d="M3 8h27l2 20H3z" fill="url(#gFolder)" stroke="#c8a84e"/><path d="M6 31V20h22v11h-5v-6H11v6z" fill="#9fd3ee" stroke="#6aa6c9"/></svg></button><i class="pile"></i>
  <button class="tb fr" aria-label="Viber"><svg width="32" height="32" viewBox="0 0 32 32"><path d="M16 1C5 1 2 5 2 14c0 7 2 10 6 12v6l6-5c12 1 16-3 16-13S27 1 16 1z" fill="#7b57d9" stroke="#fff" stroke-width="2"/><path d="M9 8c2-2 3-1 5 3-2 2-2 3 3 8 3-3 4-2 7 1-2 5-4 4-8 2-4-3-8-8-7-14z" fill="#fff"/><path d="M17 6c5 0 8 4 8 9M17 9c3 0 5 3 5 6M17 12c2 0 2 1 2 3" stroke="#fff" fill="none" stroke-width="1.300"/></svg></button>
  <button class="tb fr" aria-label="ICQ"><svg width="30" height="30" viewBox="-15 -15 30 30"><g fill="#3fb549"><ellipse cx="0" cy="-9" rx="3.800" ry="5.500"/><ellipse cx="0" cy="-9" rx="3.800" ry="5.500" transform="rotate(45)"/><ellipse cx="0" cy="-9" rx="3.800" ry="5.500" transform="rotate(90)"/><ellipse cx="0" cy="-9" rx="3.800" ry="5.500" transform="rotate(135)"/><ellipse cx="0" cy="-9" rx="3.800" ry="5.500" transform="rotate(180)"/><ellipse cx="0" cy="-9" rx="3.800" ry="5.500" transform="rotate(278)"/><ellipse cx="0" cy="-9" rx="3.800" ry="5.500" transform="rotate(320)"/></g><ellipse cx="0" cy="-9" rx="3.600" ry="5" transform="rotate(235)" fill="#ea4335"/><circle r="4" fill="#fbd928"/></svg></button>
  <button class="tb fr" aria-label="Chrome"><svg width="30" height="30" viewBox="-15 -15 30 30"><circle r="14.500" fill="#fcc934"/><path d="M-12.600-7.200A14.500 14.500 0 0 1 12.600-7.200L0-6.500-5.600-3.200z" fill="#dd4b39"/><path d="M-12.600-7.200A14.500 14.500 0 0 0 0 14.500L5.600 3.200 0 6.500-5.600 3.200z" fill="#1da362"/><circle r="6.800" fill="#fff"/><circle r="5.300" fill="#4688f1"/></svg></button>
  <button class="tb" aria-label="Поиск документов"><svg width="32" height="32" viewBox="0 0 32 32"><path d="M16 5l15 12-15 11L1 17z" fill="#8797ad" stroke="#dfe6ee"/><path d="M1 17l15 11 15-11v2L16 31 1 19z" fill="#39465c"/><path d="M8 18l9-7M11 21l10-8M14 23l10-8M16 25l10-8" stroke="#e8eef5" stroke-dasharray="3 1"/><circle cx="11" cy="9" r="7.500" fill="#7fc3f3" stroke="#e3f3ff"/><path d="M7 7h8M7 9h8M7 11h8" stroke="#fff"/><path d="M6 14l-5 5" stroke="#123" stroke-width="3"/></svg></button>
  <button class="tb fr" aria-label="Excel"><svg width="30" height="30" viewBox="0 0 30 30"><path d="M5 1h24v28H1V5z" fill="#d9efd0" stroke="#2f8a35" stroke-width="1.500"/><path d="M17 2h11v12H17z" fill="#8fd07a"/><path d="M4 6l13 16M17 6L5 22" stroke="#2b7f33" stroke-width="5"/><path d="M16 15l14 4-2 9-23-1 1-3h12z" fill="#fff"/><path d="M18 18l10 3M19 21l8 3M10 25l16 2" stroke="#5aa84a" stroke-dasharray="4 1"/></svg></button>
  <button class="tb fr act" aria-label="Paint"><svg width="32" height="32"><use href="#palette"/></svg></button>
  <div class="tray">
    <span class="lang">EN</span>
    <svg class="i16"><use href="#help"/></svg>
    <svg width="10" height="18" viewBox="0 0 10 18"><path d="M3.500.500h5v3h-5zM.5 2.500h5v3h-5z" fill="#123a70" stroke="#fff"/><path d="M2 13h6l-3 3z" fill="#fff"/></svg>
    <i class="up"></i>
    <svg class="i16" viewBox="0 0 16 16"><path d="M2 1v15" stroke="#fff" stroke-width="1.500"/><path d="M3 3h5l1 2h6l-1 4H9L8 8H3z" fill="#fff"/></svg>
    <svg class="i16" viewBox="0 0 16 16"><path d="M4 1l4 2.500L4 6 0 3.500zM12 1l4 2.500L12 6 8 3.500zM4 6l4 2.500L4 11 0 8.500zM12 6l4 2.500L12 11 8 8.500zM8 10l4 2-4 3-4-3z" fill="#fff"/><circle cx="11.500" cy="11.500" r="4.500" fill="#2fae3c"/><path d="M9 11.500l2 2 3-4" stroke="#fff" fill="none" stroke-width="1.500"/></svg>
    <svg class="i16" viewBox="0 0 16 16"><path d="M5.500 4.500h10v7h-10zM2.500 5v9.500H9M7 14.500h8M10.500 12v2M.5 1.500v3h4v-3" fill="none" stroke="#fff" stroke-width="1.200"/></svg>
    <svg class="i16" viewBox="0 0 16 16"><path d="M1 5h3l4-4v14l-4-4H1z" fill="#fff"/><path d="M10 5c2 2 2 4 0 6M12 3c3 3 3 7 0 10" stroke="#fff" fill="none"/></svg>
    <svg class="i16" viewBox="0 0 16 16"><path d="M4 14c-5 0-5-6-1-6 0-6 9-7 10-1 4 1 4 7-1 7z" fill="#fff"/><path d="M8 13V8M5.500 9.500L8 7l2.500 2.500" stroke="#1b7be0" stroke-width="2" fill="none"/></svg>
    <time>14:18<br>03.10.2017</time>
    <i class="peek"></i>
  </div>
</nav>
</body>
</html>
```

FILE: styles.css
```css
* { box-sizing: border-box; }
html, body { height: 100%; }
body {
  margin: 0;
  display: flex;
  flex-direction: column;
  overflow: hidden;
  font: 11px/14px "Open Sans", "Noto Sans", sans-serif;
  color: #1e395b;
  background: #c6d0e1;
}
button { font: inherit; color: inherit; background: none; border: 0; padding: 0; white-space: nowrap; text-align: center; }
h1, h2, p { margin: 0; font: inherit; }
svg { display: block; flex: none; }
.defs { position: absolute; width: 0; height: 0; }
.i16 { width: 16px; height: 16px; }
.i14 { width: 14px; height: 14px; }
.title { font-size: 12px; }

/* little arrows */
.dn, .up, .lf, .rt { flex: none; display: inline-block; width: 0; height: 0; border: 3px solid transparent; }
.dn { border-top-color: #4c5a70; border-bottom: 0; }
.up { border-bottom-color: #333; border-top: 0; }
.lf { border-right: 4px solid #333; border-left: 0; }
.rt { border-left: 4px solid #333; border-right: 0; }
.more { display: block; width: 7px; height: 6px; background: linear-gradient(#222, #222) 0 0 / 7px 1px no-repeat, conic-gradient(from 315deg at 50% 100%, #222 90deg, transparent 0) 0 2px / 7px 4px no-repeat; }

/* Paint title bar */
.titlebar {
  height: 22px; flex: none; display: flex; align-items: center;
  border-bottom: 1px solid #39445c; color: #0a0f18;
  background:
    linear-gradient(90deg, #dfe7f2 0, #cddaed 180px, rgba(160,182,216,.6) 250px, transparent 330px),
    radial-gradient(circle at 341px 15px, rgba(200,110,50,.8) 2px, transparent 9px),
    radial-gradient(circle at 443px 15px, rgba(150,45,85,.9) 3px, transparent 10px),
    radial-gradient(circle at 545px 14px, rgba(50,125,200,.9) 4px, transparent 11px),
    radial-gradient(circle at 648px 15px, rgba(60,100,165,.9) 5px, transparent 11px),
    radial-gradient(circle at 855px 15px, rgba(140,75,160,.8) 2px, transparent 8px),
    radial-gradient(circle at 957px 15px, rgba(55,100,175,.9) 5px, transparent 11px),
    radial-gradient(circle at 1061px 15px, rgba(150,130,190,.7) 2px, transparent 8px),
    linear-gradient(90deg, transparent, rgba(130,165,215,.5)) 1100px 0 / 240px 22px no-repeat,
    repeating-linear-gradient(90deg, transparent 0 30px, rgba(50,75,125,.22) 40px 50px, transparent 62px 66px, rgba(50,75,125,.2) 72px 74px, transparent 84px 95px, rgba(225,235,250,.3) 103px) 325px 0 / 870px 22px no-repeat,
    linear-gradient(#5a79ae, #7595c8 50%, #7896c6);
}
.titlebar > .i16 { margin-right: 6px; }
.tsep { width: 2px; height: 13px; flex: none; background: linear-gradient(90deg, #7f8da6 50%, #eef3fa 50%); }
.qa { display: flex; align-items: center; gap: 5px; }
.titlebar .tsep + .qa { margin-left: 9px; }
.titlebar .qa { margin-right: 6px; }
.titlebar .qa + .tsep { margin-left: 4px; }
.titlebar .qa:nth-of-type(4) { margin: 0 3px; }
.blue { color: #2f9fdc; }
.gray { color: #9ba6b8; }
.titlebar .title { margin-left: 5px; }
.winbtns { align-self: flex-start; margin-left: auto; display: flex; margin-right: 3px; border: 1px solid #3f4d68; border-top: 0; border-radius: 0 0 5px 5px; overflow: hidden; box-shadow: 0 0 0 1px #b7c7e0; }
.winbtns button { width: 28px; height: 17px; display: grid; place-items: center; background: linear-gradient(#b4c6e0, #8ba5cb 50%, #6f8cb8 50%, #94add2); border-right: 1px solid #4b5b7a; }
.winbtns .close { width: 46px; border: 0; background: linear-gradient(#dea294, #cc6650 50%, #b63a22 50%, #cc6a4c); }

/* Paint tabs */
.ptabs { height: 24px; flex: none; display: flex; align-items: stretch; padding-top: 1px; background: linear-gradient(#dfe9f5, #dbe6f4); border-bottom: 1px solid #bccadd; }
.pfile { width: 56px; margin-right: 2px; display: grid; place-items: center; background: linear-gradient(#4177c4, #2a5dab 50%, #1a4690 50%, #2f76c6); border: 1px solid #1c3f7c; border-bottom: 0; border-radius: 0 3px 0 0; }
.ptab { width: 66px; }
.ptab.on { background: #f9fbfe; border: 1px solid #b9c9de; border-bottom: 0; border-radius: 3px 3px 0 0; margin-bottom: -1px; }
.ptab + .ptab { width: 54px; }
.phelp { margin-left: auto; margin-right: 4px; }

/* Paint ribbon */
.pribbon { height: 92px; flex: none; display: flex; background: linear-gradient(#f7fbff, #e6eef9 30%, #dbe6f5 55%, #dce7f5 90%, #e4eefa); border-bottom: 1px solid #9fb0c8; }
.pg { flex: none; display: flex; flex-direction: column; position: relative; padding: 4px 2px 1px 4px; }
.pg::after { content: ""; position: absolute; right: 0; top: 5px; bottom: 7px; width: 2px; background: linear-gradient(90deg, #a6b7d0 50%, #f8fbff 50%); }
.body { flex: 1; display: flex; }
.lab { text-align: center; color: #73839c; line-height: 14px; height: 14px; white-space: nowrap; }
.big { display: flex; flex-direction: column; align-items: center; height: 66px; padding-top: 3px; line-height: 13px; }
.big > span { margin-top: 4px; }
.big > .dn { margin-top: 5px; }
.rows { display: flex; flex-direction: column; align-items: flex-start; }
.row { height: 22px; display: flex; align-items: center; gap: 3px; }
.row .dn { margin-left: 2px; }
.g-clip { width: 155px; }
.g-clip .big { width: 56px; }
.g-clip .row { padding-left: 1px; }
.g-image { width: 187px; background: radial-gradient(ellipse at 50% 100%, rgba(240,252,255,.9), transparent 70%); }
.g-image .big { width: 56px; }
.g-image .row { padding: 0 4px; margin-left: 1px; }
.selected { background: linear-gradient(#fcd79b, #fdc67c 40%, #fdb64e 57%, #fecb6a); border: 1px solid #c29a3e; border-radius: 3px; padding-top: 2px; }
.g-image .selected > span { border-top: 1px solid #dba33c; width: 54px; margin-top: 2px; display: flex; justify-content: center; padding-top: 3px; line-height: 12px; }
.g-image .hot { background: linear-gradient(#fdf0c8, #fce6a0 45%, #fbd560 50%, #fdec9a); border: 1px solid #f0b429; border-radius: 3px; padding: 0 3px; }
.g-tools { width: 81px; }
.g-tools .body { flex-direction: column; gap: 7px; padding: 8px 0 0 1px; }
.trio { display: flex; width: 69px; height: 22px; border: 1px solid #b3c0d5; border-radius: 3px; background: #ecf2fb; }
.trio button { flex: 1; display: grid; place-items: center; border-right: 1px solid #d3dcea; }
.trio button:last-child { border-right: 0; }
.letter { font: bold 19px/20px "Liberation Serif", serif; color: #1d3c63; }
.g-brush { width: 53px; }
.g-brush .big { width: 44px; }
.g-shapes { width: 250px; }
.g-shapes .body { padding-left: 2px; }
.gallery { display: flex; width: 157px; height: 60px; margin: 3px 6px 0 0; border: 1px solid #b0c1da; background: #f5f9fe; }
.gscroll { margin-left: auto; width: 14px; display: grid; border-left: 1px solid #ccd7e6; }
.gscroll button { display: grid; place-items: center; background: #edf3fb; border-bottom: 1px solid #dae3ef; }
.dim { color: #8b98ab; }
.dim button { color: inherit; }
.dim .dn, .off .up { opacity: .5; }
.g-size { width: 64px; }
.g-size .big { width: 58px; }
.g-colors { width: 379px; }
.c1 { width: 42px; }
.c2 { width: 41px; }
.sw { width: 24px; height: 24px; margin: 4px 0; background: #fff; border: 1px solid #7f8894; }
.sw.black { width: 33px; height: 33px; margin: 0 0 -1px; background: #000; border: 1px solid #8b8066; box-shadow: inset 0 0 0 1px #fbd9a0; }
.pal { display: grid; grid-template-columns: repeat(10, 20px); grid-auto-rows: 20px; gap: 2px; margin: 1px 2px 0; }
.pal button { border: 1px solid #a0a0a0; box-shadow: inset 0 0 0 1px #fff; }
.pal .none { box-shadow: none; }
.edit { width: 62px; }

/* work area */
.work { flex: 1; min-height: 0; position: relative; display: grid; grid-template: 1fr 17px / 1fr 16px; }
.canvas { position: relative; overflow: hidden; padding: 5px 0 0 5px; background: linear-gradient(#c6cfe0, #c6d2e4 200px, #d3dff0); }
.excel { height: 100%; overflow: hidden; background: #fff; display: flex; flex-direction: column; color: #3b3f46; }
.xtitle { height: 24px; flex: none; display: flex; align-items: center; position: relative; color: #0a0f18;
  background:
    linear-gradient(90deg, rgba(220,230,244,.85) 0, rgba(190,207,232,.7) 110px, transparent 200px),
    radial-gradient(130px 20px at 720px 12px, rgba(220,232,248,.85) 50%, transparent),
    repeating-linear-gradient(90deg, transparent 0 20px, rgba(25,60,120,.2) 40px 60px, transparent 90px 103px),
    linear-gradient(#4872b5, #86a5d0 80%, #93b0d7); }
.xtitle .i16:first-child { margin: 0 4px 0 1px; }
.xtitle .tsep + .qa { margin-left: 7px; }
.xtitle .tsep:nth-of-type(2) + .qa { margin-left: 2px; }
.xtitle .qa.gray { margin-left: 7px; }
.xtitle .gray + .tsep { margin-left: 8px; }
.xtitle .title { position: absolute; left: 0; right: 0; text-align: center; padding-left: 22px; }
.xtitle .winbtns { margin-right: -33px; position: relative; }
.xtitle .winbtns .close { width: 60px; padding-right: 12px; }
.xtabs { height: 24px; flex: none; display: flex; border-bottom: 1px solid #a4adb9; background: linear-gradient(#9db7da, #c9d8ec 40%, #edf2f9 90%); }
.xfile { width: 56px; margin-right: 4px; color: #fff; font-weight: 600; background: linear-gradient(#2f8338, #1f7a28 50%, #3fae3c); border: 1px solid #1f6a25; border-radius: 2px 2px 0 0; }
.xtab { padding: 0 15px; }
.xtab.on { width: 68px; padding: 0; background: #fff; border: 1px solid #b4bbc5; border-bottom: 0; border-radius: 3px 3px 0 0; margin-bottom: -1px; }
.gap { width: 274px; }
.xtab + .xtab + .xtab { padding: 0 14px; }
.xright { margin-left: auto; display: flex; align-items: center; gap: 9px; padding-right: 5px; }
.xribbon { height: 86px; flex: none; display: flex; background: linear-gradient(#fff, #fdfdfe 50%, #f1f3f5 80%, #e7eaed); border-bottom: 2px solid #8f959d; }
.xg { flex: none; display: flex; flex-direction: column; border-right: 1px solid #c5cad1; padding-top: 3px; }
.xg .lab { position: relative; color: #6b7079; }
.xg .big { line-height: 13px; padding-top: 2px; height: 64px; }
.xg .big > svg, .sorticon { height: 32px; }
.big span .dn { margin: 0 0 3px 3px; }
.launch { position: absolute; right: 5px; top: 4px; width: 8px; height: 8px; }
.x-clip { width: 103px; }
.x-clip .big { width: 62px; padding-left: 6px; }
.x-clip .lab, .x-font .lab { padding-right: 20px; }
.stack { display: flex; flex-direction: column; gap: 5px; }
.stack button { height: 17px; min-width: 22px; display: flex; align-items: center; gap: 5px; }
.x-clip .stack { padding-left: 2px; }
.two { display: flex; flex-direction: column; gap: 7px; padding-top: 7px; }
.line { display: flex; align-items: center; height: 22px; }
.sel { position: relative; display: block; height: 22px; border: 1px solid #cfd3d9; background: #fff; font-size: 12px; }
.sel select { appearance: none; width: 100%; height: 20px; border: 0; background: none; padding: 0 0 0 2px; font: inherit; color: #000; }
.sel .dn { position: absolute; right: 4px; top: 8px; }
.t { width: 23px; height: 22px; display: grid; place-items: center; flex: none; }
.t.on { background: linear-gradient(#fcdc88, #fbc549 60%, #fde08c); border: 1px solid #c9962f; border-radius: 2px; }
.t-b, .t-i, .t-u, .t-lg, .t-sm, .t-color { font: bold 15px/18px "Liberation Serif", serif; color: #111; }
.t-i { font-style: italic; }
.t-u { text-decoration: underline; }
.t-lg { font-size: 18px; position: relative; margin-left: 1px; }
.t-sm { font-size: 13px; position: relative; }
.tri { position: absolute; right: 0; top: 1px; border: 3px solid transparent; border-bottom-color: #3967b2; border-top: 0; }
.tri.down { border: 3px solid transparent; border-top-color: #3967b2; border-bottom: 0; }
.t-color { width: 16px; margin: 0 4px 0 1px; color: #35578f; height: 18px; border-bottom: 4px solid #f00; line-height: 14px; font-size: 17px; }
.g8 { margin: 0 6px 0 1px; }
.vs { width: 2px; height: 20px; background: linear-gradient(90deg, #d0d4da 50%, #fff 50%); flex: none; margin: 0 4px; }
.x-font .vs { margin: 0 2px; }
.x-font { width: 210px; }
.x-font .two { padding-left: 5px; }
.x-align { width: 363px; }
.x-align .two { padding-left: 5px; }
.x-align .line .far { margin-left: 12px; }
.orient span { font: bold 11px/12px "Liberation Serif", serif; color: #222; transform: rotate(-45deg); display: block; }
.x-num { width: 142px; }
.x-num .two { padding-left: 4px; }
.x-num .g8 { margin-right: 4px; }
.t-n { color: #333; font-size: 13px; }
.t-000 { width: 26px; font-size: 11px; }
.x-styles { width: 250px; }
.w42 { width: 43px; margin-left: -1px; }
.w46 { width: 46px; }
.w52 { width: 52px; }
.w58 { width: 58px; }
.w74 { width: 74px; }
.w82 { width: 82px; }
.w112 { width: 112px; }
.w116 { width: 116px; }
.w134 { width: 134px; }
.x-cells { width: 154px; }
.x-cells .body { padding-left: 4px; }
.x-edit { width: 173px; }
.x-edit .stack { padding: 2px 0 0 7px; width: 34px; }
.sigma { font: bold 15px/16px "Liberation Serif", serif; color: #111; padding-left: 2px; }
.sorticon { display: block; width: 34px; position: relative; font: bold 16px/15px "Liberation Serif", serif; color: #2f5fae; }
.sorticon em { display: block; font-style: normal; text-align: left; }
.sorticon em + em { color: #a02c2c; }
.sorticon svg { position: absolute; left: 4px; top: 0; }

/* formula bar */
.formula { height: 165px; flex: none; margin-top: 3px; border-top: 1px solid #a3a8af; display: flex; background: #fff; }
.fleft { width: 245px; background: #dfe3e8; border-right: 1px solid #a9aeb6; border-bottom: 1px solid #a9aeb6; height: 162px; }
.namebox { display: flex; align-items: center; height: 21px; border: 1px solid #a9aeb6; border-width: 0 0 1px 1px; background: #fff; }
.namebox input { width: 142px; height: 19px; border: 0; padding: 0; text-align: center; font: 12px/18px "Open Sans", sans-serif; color: #111; background: none; }
.namebox > .dn { border-width: 4px 4px 0; border-top-color: #333; margin-left: 3px; }
.fx { flex: 1; height: 20px; margin-left: 7px; display: flex; align-items: center; justify-content: space-between; padding: 0 6px 0 4px; background: #dfe3e8; border-left: 1px solid #999ea6; border-radius: 10px 0 0 10px; }
.knob { width: 9px; height: 9px; border-radius: 50%; background: linear-gradient(#b5bac1, #f3f5f7); }
.fx em { font: italic bold 15px/18px "Liberation Serif", serif; color: #333; }
.fx small { font-size: 11px; }
.ftext { flex: 1; height: 162px; border: 0; border-bottom: 1px solid #a9aeb6; padding: 4px; resize: none; background: #fff; }

/* sheet */
.sheet { width: 100%; table-layout: fixed; border-spacing: 0; font: 13px/17px "Open Sans", sans-serif; color: #000; border-top: 1px solid #979ca5; flex: none; }
.cr { width: 26px; } .cA { width: 113px; } .cB { width: 106px; } .cC { width: 26px; } .cD { width: 108px; } .cE { width: 139px; } .cF { width: 55px; } .cG { width: 40px; } .cH { width: 33px; } .cI { width: 38px; } .cJ { width: 53px; } .cK { width: 35px; } .cL { width: 47px; } .cM { width: 31px; } .cN { width: 29px; } .cO { width: 53px; }
.sheet th, .sheet td { padding: 0; border: 0 solid #d9dadc; border-width: 0 1px 1px 0; white-space: nowrap; overflow: hidden; font-weight: normal; vertical-align: middle; }
.sheet th { background: #dfe3e8; border-color: #a9aeb5; color: #3a3d42; font-size: 12px; text-align: center; vertical-align: bottom; }
.heads th { height: 20px; }
.sheet .heads th { vertical-align: middle; }
.sheet .corner svg { margin-left: 12px; }
.sheet .cur { background: linear-gradient(#fbd46e, #fde07a); border-color: #c99240; }
.h19 { height: 19px; } .h20 { height: 20px; } .h40 { height: 40px; } .h5 { height: 5px; } .h21 { height: 21px; }
.h5 td, .h5 th { line-height: 0; font-size: 0; }
.bb td { border-bottom-color: #000; }
.bb .free, .bb .rest { border-bottom-color: #d9dadc; }
.sheet .rest { border-right: 0; background: repeating-linear-gradient(90deg, transparent 0 52px, #d9dadc 52px 53px); }
.sheet .nv .rest { background: none; }
.sheet .d td { border-color: #000; padding: 0 2px; }
.sheet .d .a { border-bottom-color: #d9dadc; background: #fff; padding: 2px 2px 0; line-height: 15px; }
.sheet .d .rest { border-bottom-color: #d9dadc; }
.sheet .nb .a, .sheet .nb .rest { border-bottom-color: #fff; }
.lime td { background-color: #66ff33; } .yel td { background-color: #ffff66; } .light td { background-color: #66ff66; } .grn td { background-color: #4df650; }
.sheet .d .lm { background-color: #66ff33; } .sheet .d .lt { background-color: #66ff66; }
.sheet .d .rest { background-color: #fff; }
.c { text-align: center; } .r { text-align: right; } .sheet .b { font-weight: bold; }
.sheet .d .er { background-image: linear-gradient(135deg, #0b7a0b 4px, transparent 4px); }
.hd td { font-size: 11px; line-height: 16px; text-align: center; }
.sheet .k { position: relative; overflow: visible; }
.k::after { content: ""; position: absolute; inset: -2px; border: 3px solid #000; pointer-events: none; z-index: 1; }
.kl::after { border-right: 0; }
.kr::after { border-left: 0; }
.sheet .bot { text-align: left; vertical-align: bottom; padding-left: 2px; }
.sheet .mint { background: #b7e1cd; border-color: #b7e1cd; }
.rot { writing-mode: vertical-rl; transform: rotate(180deg); height: 58px; width: 24px; margin: 0 auto; text-align: left; line-height: 24px; padding-top: 3px; overflow: hidden; }
.rot.two-lines { width: 34px; line-height: 16px; }
.rot.wide { width: 26px; line-height: 16px; margin: 0 0 0 2px; }
.clip { height: 59px; overflow: hidden; display: flex; align-items: flex-end; text-align: left; padding-left: 2px; }
.marquee { position: absolute; left: 131px; top: 334px; }

/* Paint scrollbars */
.vbar { background: #f0f0f0; display: flex; flex-direction: column; border-left: 1px solid #e3e3e3; }
.vbar button { height: 18px; display: grid; place-items: center; }
.vbar .end { margin-top: auto; }
.vthumb { flex: 0 0 479px; margin: 0 0 0 1px; border: 1px solid #979797; border-radius: 2px; background: linear-gradient(90deg, #f5f5f5, #dcdcdc 50%, #c6c6c8 50%, #d8d8d8); display: grid; place-items: center; }
.vthumb i { width: 7px; height: 7px; background: repeating-linear-gradient(#555 0 1px, #fff 1px 3px); }
.hbar { background: #f0f0f0; display: flex; height: 16px; }
.hbar button { width: 18px; display: grid; place-items: center; }
.hthumb { flex: 0 1 1360px; border: 1px solid #979797; border-radius: 2px; background: linear-gradient(#f5f5f5, #dcdcdc 50%, #c6c6c8 50%, #d0d0d0); display: grid; place-items: center; }
.hbar .hthumb + button { margin-left: auto; }
.hthumb i { width: 8px; height: 7px; background: repeating-linear-gradient(90deg, #555 0 1px, #fff 1px 3px); }
.tip { position: absolute; left: 215px; top: 0; width: 257px; height: 63px; padding: 7px 5px; border: 1px solid #767676; border-radius: 3px; background: linear-gradient(#fff, #e5ebf6); color: #4c4c4c; line-height: 13px; box-shadow: 2px 2px 3px rgba(0,0,0,.35); z-index: 3; }
.tip strong { display: block; font-weight: 600; }
.tip p { padding: 10px 8px 0; }

/* status bar */
.status { height: 25px; flex: none; display: flex; align-items: center; background: #f0edec; border-top: 1px solid #8e8e8e; color: #1a1a1a; }
.st { width: 156px; height: 23px; border-right: 1px solid #d5d2d1; display: flex; align-items: center; gap: 3px; padding-left: 4px; }
.st.last { flex: 1; }
.zoom { width: 198px; display: flex; align-items: center; padding-left: 20px; gap: 6px; }
.zoom label { width: 30px; }
.zoom button { position: relative; width: 16px; height: 16px; border: 1px solid #6f6f6f; border-radius: 50%; background: linear-gradient(#fff, #e0e0e0); flex: none; }
.minus { position: absolute; left: 3px; top: 6px; width: 8px; height: 2px; background: #555; }
.plus { position: absolute; left: 6px; top: 3px; width: 2px; height: 8px; background: #555; }
.zoom input { appearance: none; width: 84px; height: 18px; margin: 0 6px 0 4px; background: linear-gradient(#9d9d9d, #9d9d9d) 0 7px / 100% 1px no-repeat; }
.zoom input::-webkit-slider-thumb { appearance: none; width: 9px; height: 15px; border: 1px solid #6e6e6e; border-radius: 2px 2px 5px 5px; background: linear-gradient(90deg, #fff, #d8d8d8); }

/* taskbar */
.taskbar { height: 40px; flex: none; display: flex; align-items: stretch; padding-left: 8px; border-top: 1px solid #0f2340; color: #fff;
  background:
    radial-gradient(110px 50px at 130px 25px, rgba(30,115,200,.6), transparent),
    radial-gradient(130px 40px at 800px 40px, rgba(5,18,48,.8), transparent),
    radial-gradient(90px 50px at 1130px 30px, rgba(10,25,55,.7), transparent),
    radial-gradient(130px 50px at 680px 10px, rgba(30,120,205,.8), transparent),
    radial-gradient(120px 45px at 930px 20px, rgba(28,110,195,.85), transparent),
    radial-gradient(90px 50px at 1070px 10px, rgba(25,95,170,.8), transparent),
    linear-gradient(90deg, #0d3a78, #11478c 45%, #0d2f60 70%, #12335c);
  box-shadow: inset 0 1px 0 rgba(170,205,240,.6); }
.tb { width: 58px; margin: 0 4px 1px 0; display: grid; place-items: center; border-radius: 3px; flex: none; }
.start { width: 38px; margin-right: 24px; }
.ps { width: 38px; margin-right: 23px; }
.ps span { width: 28px; height: 27px; border: 2px solid #1cc4f6; background: #04202c; color: #1cc4f6; font: 600 15px/22px "Open Sans", sans-serif; }
.npp { width: 38px; margin-right: 13px; }
.fr { border: 1px solid #a8c4e4; background: linear-gradient(150deg, rgba(205,225,245,.65), rgba(115,155,205,.45) 45%, rgba(60,100,165,.5) 55%, rgba(100,140,200,.45)); box-shadow: 0 0 0 1px #0c2449; }
.exp { width: 52px; margin-right: 0; }
.pile { width: 8px; margin: 0 4px 1px 0; border: 1px solid #6f97c8; border-left: 0; border-radius: 0 3px 3px 0; background: linear-gradient(90deg, transparent 3px, #6f97c8 3px 4px, transparent 4px); }
.act { background: linear-gradient(150deg, #e4edf6, #b7cbe1 45%, #86a3c8 55%, #a5bcd8); border-color: #eaf3fc; }
.tray { margin-left: auto; display: flex; align-items: center; gap: 8px; }
.lang { font-size: 12px; }
.tray .up { border-width: 0 4px 5px; border-bottom-color: #fff; margin: 0 4px 0 2px; }
.tray time { width: 74px; text-align: center; line-height: 17px; margin-left: 1px; }
.peek { width: 14px; align-self: stretch; margin-left: -6px; border: 1px solid #7894b5; background: linear-gradient(120deg, rgba(200,220,240,.5), rgba(60,90,130,.3) 60%); }
```
